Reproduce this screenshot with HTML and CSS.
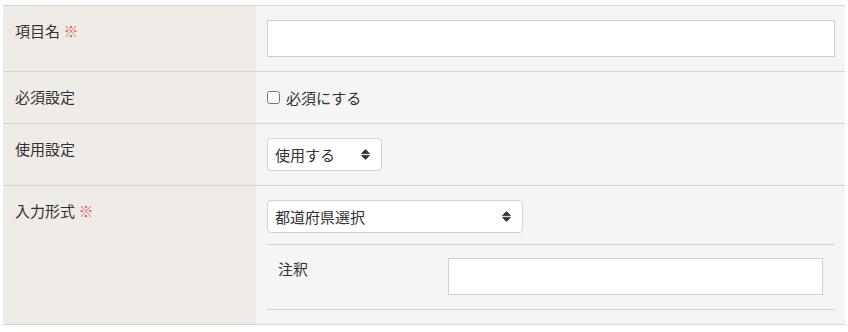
FILE: index.html
```html
<!DOCTYPE html>
<html lang="ja">
<head>
<meta charset="utf-8">
<link rel="stylesheet" href="styles.css">
</head>
<body>
<div class="page">
  <table class="form-table">
    <tr>
      <th>項目名 <span class="req">※</span></th>
      <td><input type="text" class="text-input"></td>
    </tr>
    <tr>
      <th>必須設定</th>
      <td><label class="check"><input type="checkbox"><span>必須にする</span></label></td>
    </tr>
    <tr>
      <th>使用設定</th>
      <td>
        <div class="select-wrap select-short">
          <select><option>使用する</option></select>
          <svg class="sort" width="9" height="11" viewBox="0 0 9 11"><path d="M0.5 4.6 L4.5 0.6 L8.5 4.6 Z M0.5 6.4 L8.5 6.4 L4.5 10.4 Z" fill="#333" stroke="#333" stroke-width="0.8" stroke-linejoin="round"/></svg>
        </div>
      </td>
    </tr>
    <tr>
      <th>入力形式 <span class="req">※</span></th>
      <td>
        <div class="select-wrap select-long">
          <select><option>都道府県選択</option></select>
          <svg class="sort" width="9" height="11" viewBox="0 0 9 11"><path d="M0.5 4.6 L4.5 0.6 L8.5 4.6 Z M0.5 6.4 L8.5 6.4 L4.5 10.4 Z" fill="#333" stroke="#333" stroke-width="0.8" stroke-linejoin="round"/></svg>
        </div>
        <table class="sub-table">
          <tr>
            <th>注釈</th>
            <td><input type="text" class="text-input"></td>
          </tr>
        </table>
      </td>
    </tr>
  </table>
</div>
</body>
</html>
```

FILE: styles.css
```css
* { box-sizing: border-box; }
html, body { margin: 0; padding: 0; background: #fff; }
body {
  font-family: "Noto Sans CJK JP", "Noto Sans", sans-serif;
  font-size: 15px;
  line-height: 22px;
  color: #333;
}
.page { padding: 5px 3px; }
.form-table {
  width: 842px;
  border-collapse: collapse;
}
.form-table > tbody > tr > th,
.form-table > tbody > tr > td {
  border-top: 1px solid #d6d6d6;
  border-bottom: 1px solid #d6d6d6;
  vertical-align: top;
  text-align: left;
  font-weight: normal;
}
.form-table > tbody > tr > th {
  width: 253px;
  background: #efebe6;
  padding: 14px 12px;
}
.form-table > tbody > tr > td {
  background: #f5f5f5;
  padding: 14px 10px 14px 11px;
}
.req { color: #e06666; }
.text-input {
  display: block;
  width: 100%;
  height: 37px;
  border: 1px solid #cfcfcf;
  background: #fff;
  border-radius: 0;
  margin: 0;
  padding: 0 8px;
  font: inherit;
}
.check {
  display: flex;
  align-items: center;
  gap: 6px;
  height: 23px;
}
.check input {
  margin: 0;
  width: 13px;
  height: 13px;
}
.select-wrap {
  position: relative;
  height: 33px;
}
.select-short { width: 115px; }
.select-long { width: 256px; }
.select-wrap select {
  appearance: none;
  -webkit-appearance: none;
  width: 100%;
  height: 100%;
  border: 1px solid #d3d3d3;
  border-radius: 4px;
  background: #fff;
  padding: 0 24px 0 7px;
  font: inherit;
  color: #333;
}
.sort {
  position: absolute;
  right: 12px;
  top: 11px;
}
.sub-table {
  width: 100%;
  margin-top: 11px;
  border-collapse: collapse;
}
.sub-table th,
.sub-table td {
  border-top: 1px solid #d3d3d3;
  border-bottom: 1px solid #d3d3d3;
  vertical-align: top;
  text-align: left;
  font-weight: normal;
  background: #f5f5f5;
  padding: 13px 11px 14px 11px;
}
.sub-table th { width: 170px; }
.sub-table td { padding-right: 12px; }
```
